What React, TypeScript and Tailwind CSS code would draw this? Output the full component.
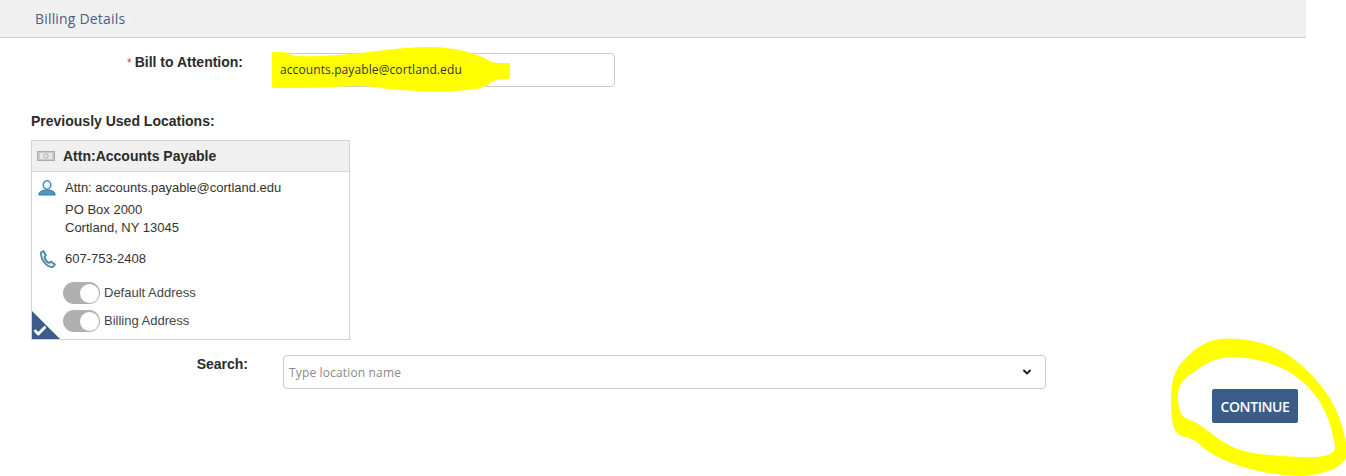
import { ChevronDown, Check } from 'lucide-react'

const sans = "font-['Liberation_Sans',Arial,sans-serif]"
const soft = "font-['Open_Sans','Noto_Sans',sans-serif]"

// smooth closed outline through the midpoints of a hand traced marker stroke
function blob(points: number[][]) {
  const mid = (a: number[], b: number[]) => [(a[0] + b[0]) / 2, (a[1] + b[1]) / 2]
  const start = mid(points[points.length - 1], points[0])
  let d = `M${start[0]} ${start[1]}`
  points.forEach((p, i) => {
    const m = mid(p, points[(i + 1) % points.length])
    d += `Q${p[0]} ${p[1]} ${m[0]} ${m[1]}`
  })
  return d + 'Z'
}

const highlight = [[272, 52], [273, 52], [288, 52], [294, 57], [347, 55], [408, 47], [449, 47], [482, 56], [492, 63], [508, 63], [510, 63], [510, 79], [508, 79], [492, 80], [486, 88], [449, 92], [392, 90], [367, 85], [318, 88], [273, 88], [272, 88], [272, 67]]
const ringOuter = [[1171, 377], [1187, 355], [1210, 339], [1243, 338], [1283, 349], [1317, 379], [1337, 409], [1347, 443], [1347, 463], [1317, 476], [1283, 476], [1243, 468], [1210, 454], [1193, 438], [1177, 436], [1171, 420]]
const ringInner = [[1178, 385], [1193, 372], [1217, 357], [1247, 357], [1283, 367], [1310, 387], [1327, 413], [1335, 443], [1335, 453], [1317, 458], [1283, 456], [1247, 453], [1223, 443], [1197, 422], [1183, 418], [1178, 407]]

function Toggle({ label }: { label: string }) {
  return (
    <div className="flex items-center h-[28px] pl-[31px]">
      <div className="w-[37px] h-[22px] rounded-full bg-[#b0b0b0] flex items-center justify-end pr-[1px]">
        <div className="w-[19px] h-[19px] rounded-full bg-white" />
      </div>
      <span className="ml-[4px] text-[13px] text-[#444]">{label}</span>
    </div>
  )
}

export default function App() {
  return (
    <div className={`relative w-[1346px] h-[476px] overflow-hidden bg-white ${sans}`}>
      {/* header */}
      <div className="w-[1306px] h-[38px] bg-[#f0f0f0] border-b border-[#cfcfcf] flex items-center pl-[35px]">
        <span className={`text-[14px] tracking-[0.18px] text-[#4a5f86] ${soft}`}>Billing Details</span>
        <ChevronDown className="w-[8px] h-[8px] text-white" strokeWidth={3} />
      </div>

      <div className="flex items-start mt-[15px] h-[34px]">
        <div className="w-[243px] text-right text-[14px] leading-[18px] font-bold text-[#2b2b2b]">
          <span className="text-[#b05050] font-normal text-[12px] mr-[3px]">*</span>Bill to Attention:
        </div>
        <div className="ml-[30px] w-[342px] h-[34px] border border-[#cccccc] rounded-[4px] flex items-center pl-[6px]">
          <span className={`relative z-10 text-[12px] tracking-[0.1px] text-[#333] ${soft}`}>accounts.payable@cortland.edu</span>
        </div>
      </div>

      <div className="ml-[31px] mt-[25px] text-[14px] leading-[18px] font-bold text-[#2b2b2b]">Previously Used Locations:</div>

      {/* address card */}
      <div className="relative ml-[31px] mt-[10px] w-[319px] h-[200px] border border-[#d4d4d4]">
        <div className="h-[31px] bg-[#f0f0f0] border-b border-[#d8d8d8] flex items-center pl-[5px]">
          <svg width="18" height="10" viewBox="0 0 18 10" fill="none">
            <rect x="0.5" y="0.5" width="17" height="9" fill="#c9c9c9" stroke="#aaa" />
            <rect x="3" y="2" width="12" height="6" fill="#e6e6e6" />
            <circle cx="9" cy="5" r="2.2" stroke="#aaa" />
          </svg>
          <span className="ml-[8px] text-[14px] font-bold text-[#2b2b2b]">Attn:Accounts Payable</span>
        </div>
        <div className="flex items-center h-[24px] pl-[6px] mt-[4px]">
          <svg width="18" height="16" viewBox="0 0 18 16" fill="none">
            <ellipse cx="9" cy="5" rx="3.800" ry="4.200" stroke="#4a90b8" strokeWidth="1.500" />
            <path d="M.8 15c0-3 2.700-4.600 5.700-5h5c3 .4 5.700 2 5.700 5z" fill="#4a98c4" stroke="#3a7fa8" />
          </svg>
          <span className="ml-[9px] text-[13px] text-[#333]">Attn: accounts.payable@cortland.edu</span>
        </div>
        <div className="pl-[33px] mt-[1px] text-[13px] leading-[18px] text-[#333]">
          <div>PO Box 2000</div>
          <div>Cortland, NY 13045</div>
        </div>
        <div className="flex items-center h-[20px] pl-[7px] mt-[12px]">
          <svg width="17" height="18" viewBox="0 0 17 18" fill="none">
            <path d="M2 2.500 4.500 1 7 5.500 5.500 7c.5 2.500 2.500 5 4.500 6l2-1.500 4 3-2 2.500C8 18 1 9 2 2.500z" fill="#dbe9f1" stroke="#4a86a8" strokeWidth="1.700" strokeLinejoin="round" />
          </svg>
          <span className="ml-[9px] text-[13px] text-[#333]">607-753-2408</span>
        </div>
        <div className="mt-[10px]">
          <Toggle label="Default Address" />
          <Toggle label="Billing Address" />
        </div>
        {/* selected corner */}
        <div className="absolute left-0 bottom-0 w-[28px] h-[28px] bg-[#3b5c88] [clip-path:polygon(0_0,100%_100%,0_100%)]" />
        <Check className="absolute left-[1px] bottom-[1px] w-[14px] h-[14px] text-white" strokeWidth={5} />
      </div>

      <div className="flex items-start mt-[15px] h-[34px]">
        <div className="w-[248px] text-right text-[14px] leading-[18px] font-bold text-[#2b2b2b]">Search:</div>
        <div className="ml-[35px] w-[763px] h-[34px] border border-[#cccccc] rounded-[4px] flex items-center justify-between pl-[5px] pr-[12px]">
          <span className={`relative top-[1px] text-[12px] tracking-[0.15px] text-[#8a8a8a] ${soft}`}>Type location name</span>
          <ChevronDown className="w-[12px] h-[12px] text-[#222]" strokeWidth={4} />
        </div>
      </div>

      {/* button sits in the right margin, under the search row */}
      <button className={`absolute left-[1212px] top-[389px] w-[86px] h-[34px] rounded-[2px] bg-[#3b5c88] text-white text-[14px] font-semibold tracking-[-0.4px] ${soft}`}>
        CONTINUE
      </button>

      {/* yellow marker scribbles over the page */}
      <svg className="absolute inset-0 pointer-events-none" width="1346" height="476" viewBox="0 0 1346 476" fill="none">
        <path d={blob(highlight)} fill="#ffff00" />
        <path d={blob(ringOuter) + blob(ringInner)} fill="#ffff00" fillRule="evenodd" />
      </svg>
    </div>
  )
}
